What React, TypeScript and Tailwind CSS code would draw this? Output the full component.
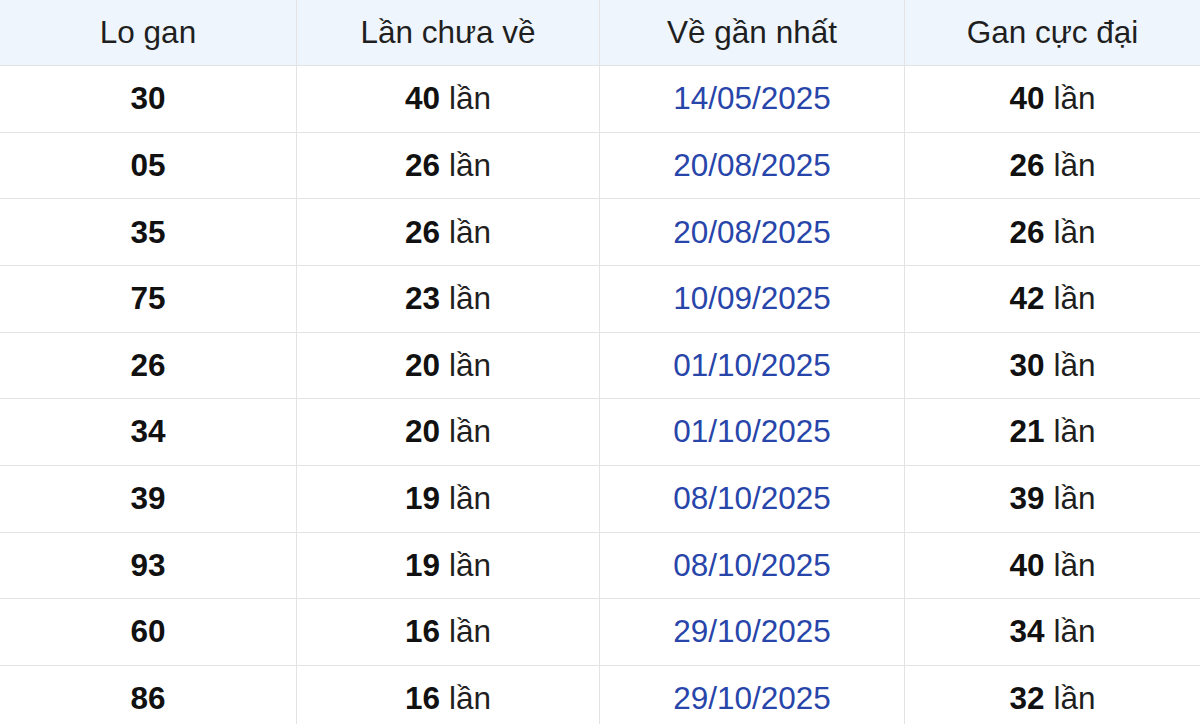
import React from 'react';

type Row = { lo: string; chua: number; date: string; max: number };

const rows: Row[] = [
  { lo: '30', chua: 40, date: '14/05/2025', max: 40 },
  { lo: '05', chua: 26, date: '20/08/2025', max: 26 },
  { lo: '35', chua: 26, date: '20/08/2025', max: 26 },
  { lo: '75', chua: 23, date: '10/09/2025', max: 42 },
  { lo: '26', chua: 20, date: '01/10/2025', max: 30 },
  { lo: '34', chua: 20, date: '01/10/2025', max: 21 },
  { lo: '39', chua: 19, date: '08/10/2025', max: 39 },
  { lo: '93', chua: 19, date: '08/10/2025', max: 40 },
  { lo: '60', chua: 16, date: '29/10/2025', max: 34 },
  { lo: '86', chua: 16, date: '29/10/2025', max: 32 },
];

const cols = 'grid grid-cols-[297px_303px_305px_295px]';
const cell = 'flex items-center justify-center border-r border-[#e3e3e3] last:border-r-0';

const App: React.FC = () => {
  return (
    <div className="w-[1200px] h-[724px] overflow-hidden bg-white text-[31.5px] text-[#1f1f1f] [font-family:Liberation_Sans,Arial,sans-serif]">
      <div className={`${cols} h-[66px] bg-[#eef5fc] border-b border-[#e3e3e3]`}>
        <div className={cell}>Lo gan</div>
        <div className={cell}>Lần chưa về</div>
        <div className={cell}>Về gần nhất</div>
        <div className={cell}>Gan cực đại</div>
      </div>
      {rows.map((r, i) => (
        <div key={i} className={`${cols} h-[66.67px] border-b border-[#e3e3e3]`}>
          <div className={`${cell} font-bold text-[#111]`}>{r.lo}</div>
          <div className={cell}>
            <span className="font-bold text-[#111]">{r.chua}</span>&nbsp;lần
          </div>
          <div className={`${cell} text-[#2845aa]`}>{r.date}</div>
          <div className={cell}>
            <span className="font-bold text-[#111]">{r.max}</span>&nbsp;lần
          </div>
        </div>
      ))}
    </div>
  );
};

export default App;
